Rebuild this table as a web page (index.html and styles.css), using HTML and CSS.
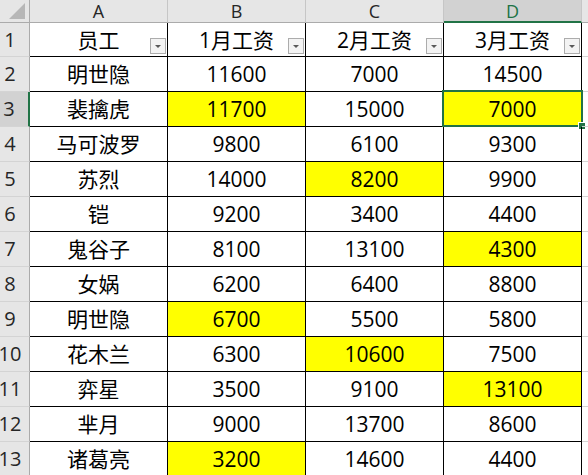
FILE: index.html
```html
<!DOCTYPE html>
<html lang="zh-CN">
<head>
<meta charset="utf-8">
<link rel="stylesheet" href="styles.css">
</head>
<body>
<div class="sheet">
  <div class="corner"><span class="corner-tri"></span></div>
  <div class="colh">A</div>
  <div class="colh">B</div>
  <div class="colh">C</div>
  <div class="colh sel">D</div>
  <div class="colh rest"></div>

  <div class="rowh">1</div>
  <div class="cell head">员工<span class="filter"></span></div>
  <div class="cell head">1月工资<span class="filter"></span></div>
  <div class="cell head">2月工资<span class="filter"></span></div>
  <div class="cell head">3月工资<span class="filter"></span></div>
  <div class="cell rest"></div>

  <div class="rowh">2</div>
  <div class="cell">明世隐</div><div class="cell">11600</div><div class="cell">7000</div><div class="cell">14500</div><div class="cell rest"></div>

  <div class="rowh sel">3</div>
  <div class="cell">裴擒虎</div><div class="cell hl">11700</div><div class="cell">15000</div><div class="cell hl active">7000<span class="selbox"><span class="handle"></span></span></div><div class="cell rest"></div>

  <div class="rowh">4</div>
  <div class="cell">马可波罗</div><div class="cell">9800</div><div class="cell">6100</div><div class="cell">9300</div><div class="cell rest"></div>

  <div class="rowh">5</div>
  <div class="cell">苏烈</div><div class="cell">14000</div><div class="cell hl">8200</div><div class="cell">9900</div><div class="cell rest"></div>

  <div class="rowh">6</div>
  <div class="cell">铠</div><div class="cell">9200</div><div class="cell">3400</div><div class="cell">4400</div><div class="cell rest"></div>

  <div class="rowh">7</div>
  <div class="cell">鬼谷子</div><div class="cell">8100</div><div class="cell">13100</div><div class="cell hl">4300</div><div class="cell rest"></div>

  <div class="rowh">8</div>
  <div class="cell">女娲</div><div class="cell">6200</div><div class="cell">6400</div><div class="cell">8800</div><div class="cell rest"></div>

  <div class="rowh">9</div>
  <div class="cell">明世隐</div><div class="cell hl">6700</div><div class="cell">5500</div><div class="cell">5800</div><div class="cell rest"></div>

  <div class="rowh">10</div>
  <div class="cell">花木兰</div><div class="cell">6300</div><div class="cell hl">10600</div><div class="cell">7500</div><div class="cell rest"></div>

  <div class="rowh">11</div>
  <div class="cell">弈星</div><div class="cell">3500</div><div class="cell">9100</div><div class="cell hl">13100</div><div class="cell rest"></div>

  <div class="rowh">12</div>
  <div class="cell">芈月</div><div class="cell">9000</div><div class="cell">13700</div><div class="cell">8600</div><div class="cell rest"></div>

  <div class="rowh">13</div>
  <div class="cell">诸葛亮</div><div class="cell hl">3200</div><div class="cell">14600</div><div class="cell">4400</div><div class="cell rest"></div>
</div>
</body>
</html>
```

FILE: styles.css
```css
html, body {
  margin: 0;
  padding: 0;
  background: #ffffff;
  overflow: hidden;
}

.sheet {
  display: grid;
  grid-template-columns: 30px 138px 138px 138px 138px 1fr;
  grid-template-rows: 23px 34px;
  grid-auto-rows: 35px;
  width: 588px;
  font-family: "Open Sans", "Noto Sans CJK SC", sans-serif;
  color: #000;
}

.corner {
  box-sizing: border-box;
  background: #e6e6e6;
  border-right: 1px solid #ababab;
  border-bottom: 1px solid #ababab;
  display: flex;
  justify-content: flex-end;
  align-items: flex-end;
  padding: 0 4px 3px 0;
}

.corner-tri {
  width: 0;
  height: 0;
  border-left: 16px solid transparent;
  border-bottom: 16px solid #b7b7b7;
}

.colh {
  box-sizing: border-box;
  background: #e6e6e6;
  border-right: 1px solid #c6c6c6;
  border-bottom: 1px solid #ababab;
  display: flex;
  align-items: center;
  justify-content: center;
  font-size: 18px;
  color: #262626;
  line-height: 1;
  padding-bottom: 1px;
}

.colh.sel {
  background: #d2d2d2;
  color: #217346;
  border-bottom: 2px solid #217346;
  padding-bottom: 0;
}

.colh.rest {
  border-right: none;
}

.rowh {
  box-sizing: border-box;
  background: #e6e6e6;
  border-right: 1px solid #ababab;
  border-bottom: 1px solid #d4d4d4;
  display: flex;
  align-items: center;
  justify-content: center;
  padding-right: 9px;
  font-size: 20px;
  color: #262626;
  line-height: 1;
}

.rowh.sel {
  background: #d2d2d2;
  border-right: 2px solid #217346;
  padding-right: 10px;
}

.cell {
  box-sizing: border-box;
  position: relative;
  border-right: 1px solid #000;
  border-bottom: 1px solid #000;
  display: flex;
  align-items: center;
  justify-content: center;
  font-size: 21px;
  line-height: 1;
  white-space: nowrap;
}

.cell.head {
  padding-top: 2px;
}

.cell.hl {
  background: #ffff00;
}

.cell.rest {
  border-right: none;
  border-bottom: 1px solid #d4d4d4;
}

.filter {
  position: absolute;
  right: 1px;
  bottom: 2px;
  box-sizing: border-box;
  width: 16px;
  height: 16px;
  border: 1px solid #acacac;
  background: #f3f3f3;
  display: flex;
  align-items: center;
  justify-content: center;
}

.filter::after {
  content: "";
  width: 0;
  height: 0;
  border-left: 3px solid transparent;
  border-right: 3px solid transparent;
  border-top: 3px solid #595959;
}

.selbox {
  position: absolute;
  left: -2px;
  top: -2px;
  width: 141px;
  height: 37px;
  box-sizing: border-box;
  border: 2px solid #217346;
  pointer-events: none;
}

.handle {
  position: absolute;
  right: -4px;
  bottom: -4px;
  width: 6px;
  height: 6px;
  background: #217346;
  outline: 1px solid #ffffff;
}
```
